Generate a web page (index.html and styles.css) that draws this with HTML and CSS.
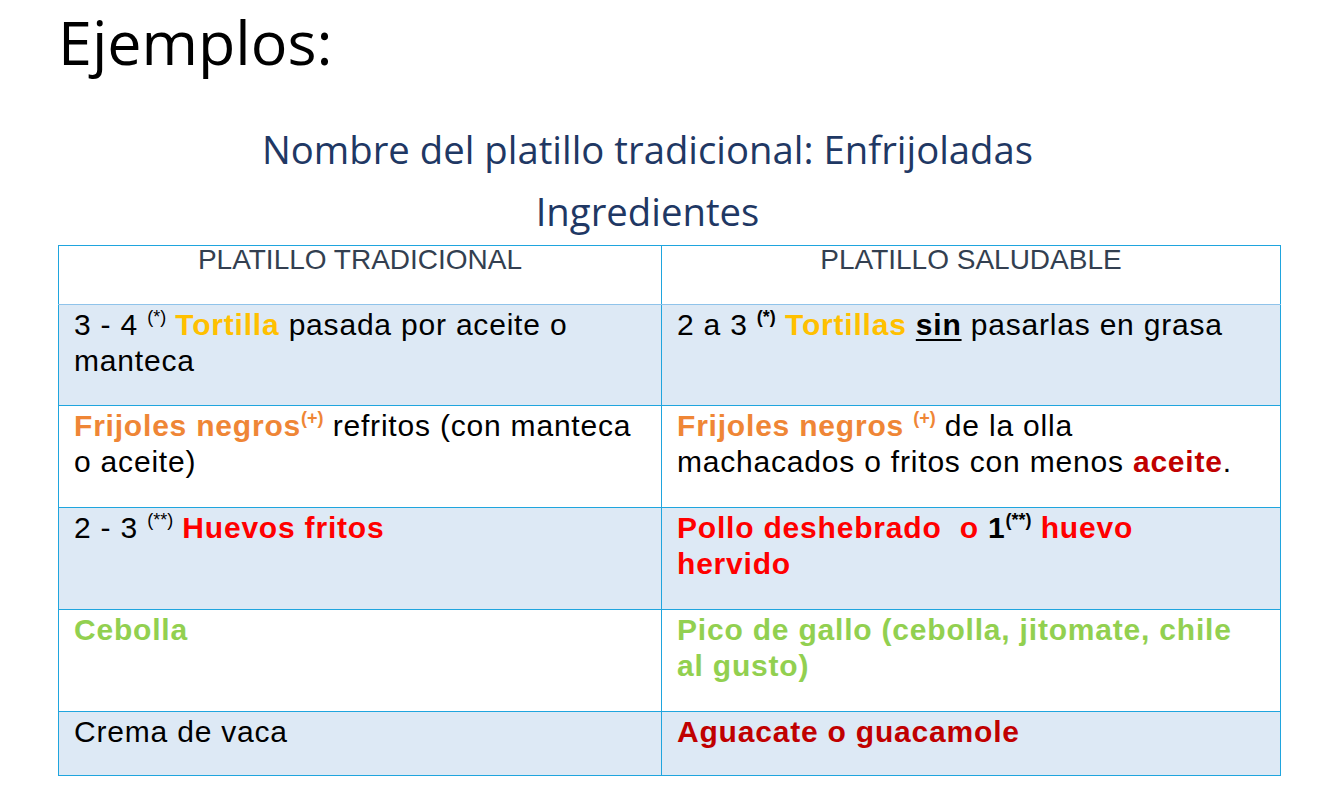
FILE: index.html
```html
<!DOCTYPE html>
<html lang="es">
<head>
<meta charset="utf-8">
<title>Ejemplos</title>
<link rel="stylesheet" href="styles.css">
</head>
<body>
<div class="page">
  <h1 class="title">Ejemplos:</h1>
  <div class="subtitle">
    <div>Nombre del platillo tradicional: Enfrijoladas</div>
    <div>Ingredientes</div>
  </div>
  <table class="recipe">
    <colgroup><col class="c1"><col class="c2"></colgroup>
    <thead>
      <tr><th>PLATILLO TRADICIONAL</th><th>PLATILLO SALUDABLE</th></tr>
    </thead>
    <tbody>
      <tr class="shade first">
        <td>3 - 4 <sup>(*)</sup> <b class="yellow">Tortilla</b> pasada por aceite o manteca</td>
        <td>2 a 3 <sup class="bold">(*)</sup> <b class="yellow">Tortillas</b> <b class="under">sin</b> pasarlas en grasa</td>
      </tr>
      <tr>
        <td><b class="orange">Frijoles negros<sup>(+)</sup></b> refritos (con manteca<br>o aceite)</td>
        <td><b class="orange">Frijoles negros <sup>(+)</sup></b> de la olla<br>machacados o fritos con menos <b class="dred">aceite</b>.</td>
      </tr>
      <tr class="shade">
        <td>2 - 3 <sup>(**)</sup> <b class="red">Huevos fritos</b></td>
        <td><b class="red">Pollo deshebrado&nbsp; o </b><b>1<sup>(**)</sup></b> <b class="red">huevo<br>hervido</b></td>
      </tr>
      <tr>
        <td><b class="green">Cebolla</b></td>
        <td><b class="green">Pico de gallo (cebolla, jitomate, chile<br>al gusto)</b></td>
      </tr>
      <tr class="shade last">
        <td>Crema de vaca</td>
        <td><b class="dred">Aguacate o guacamole</b></td>
      </tr>
    </tbody>
  </table>
</div>
</body>
</html>
```

FILE: styles.css
```css
html, body {
  margin: 0;
  padding: 0;
  background: #ffffff;
}

.page {
  width: 1329px;
  height: 811px;
  overflow: hidden;
}

.title {
  margin: 6px 0 0 58px;
  font-family: "Open Sans", "Noto Sans", sans-serif;
  font-weight: 400;
  font-size: 61px;
  line-height: 72px;
  color: #000000;
}

.subtitle {
  margin: 40px 34px 0 0;
  text-align: center;
  font-family: "Open Sans", "Noto Sans", sans-serif;
  font-size: 38.3px;
  line-height: 62px;
  color: #1f3864;
}

.recipe {
  margin: 3px 0 0 58px;
  width: 1222px;
  border-collapse: collapse;
  table-layout: fixed;
  font-family: "Liberation Sans", Arial, sans-serif;
  font-size: 30px;
  letter-spacing: 0.8px;
  line-height: 36px;
  color: #000000;
}

.recipe .c1 { width: 603px; }
.recipe .c2 { width: 619px; }

.recipe th,
.recipe td {
  border: 1px solid #1fa5de;
  vertical-align: top;
  text-align: left;
}

.recipe th {
  height: 58px;
  padding: 0 15px;
  text-align: center;
  font-weight: 400;
  font-size: 28px;
  letter-spacing: 0;
  line-height: 28px;
  color: #333f50;
  border-bottom-color: #8fc3ea;
}

.recipe td {
  height: 99px;
  padding: 2px 15px 0 15px;
}

.recipe tr.first td {
  height: 98px;
}

.recipe tr.last td {
  height: 61px;
}

.recipe tr.shade td {
  background: #dde9f5;
}

.recipe sup {
  font-size: 18px;
  letter-spacing: 0;
  line-height: 0;
  vertical-align: 12px;
  font-weight: 400;
}

.recipe sup.bold,
.recipe b sup {
  font-weight: 700;
}

.recipe b {
  font-weight: 700;
}

.yellow { color: #ffc000; }
.orange { color: #ef8636; }
.red { color: #ff0000; }
.dred { color: #c00000; }
.green { color: #92d050; }
.under {
  color: #000000;
  text-decoration: underline;
  text-decoration-thickness: 2px;
  text-underline-offset: 4px;
}
```
